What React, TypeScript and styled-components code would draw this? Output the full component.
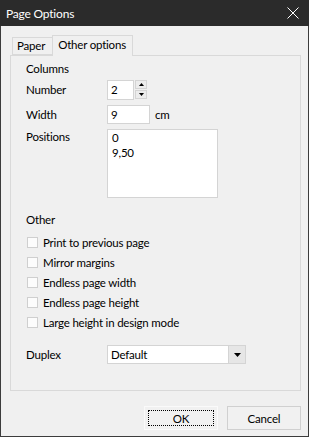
import React, { useState } from "react";
import styled, { createGlobalStyle } from "styled-components";

const GlobalStyle = createGlobalStyle`
  html, body {
    margin: 0;
    padding: 0;
    background: #f0f0f0;
  }
  * {
    box-sizing: border-box;
  }
`;

const Window = styled.div`
  width: 309px;
  height: 437px;
  background: #f0f0f0;
  border: 1px solid #3c3c3c;
  border-top: none;
  display: flex;
  flex-direction: column;
  font-family: Lato, "Noto Sans", sans-serif;
  font-size: 11.5px;
  letter-spacing: -0.2px;
  color: #000;
`;

const TitleBar = styled.div`
  height: 26px;
  margin: 0 -1px;
  background: #2b2b2b;
  color: #fff;
  font-size: 12px;
  display: flex;
  align-items: center;
  justify-content: space-between;
  padding: 0 10px 0 6px;
`;

const CloseButton = styled.div`
  width: 12px;
  height: 12px;
  display: flex;
`;

const Body = styled.div`
  flex: 1;
  display: flex;
  flex-direction: column;
  padding: 9px 7px 0 9px;
`;

const TabStrip = styled.div`
  display: flex;
  align-items: flex-end;
  height: 20px;
  padding-left: 2px;
  position: relative;
  z-index: 1;
`;

const Tab = styled.div<{ $active?: boolean }>`
  height: ${(p) => (p.$active ? "21px" : "18px")};
  padding: ${(p) => (p.$active ? "0 6px 2px 5px" : "0 7px 0 4px")};
  margin-bottom: ${(p) => (p.$active ? "-1px" : "0")};
  margin-left: ${(p) => (p.$active ? "-1px" : "0")};
  background: #f0f0f0;
  border: 1px solid #d9d9d9;
  border-bottom: ${(p) => (p.$active ? "none" : "1px solid #d9d9d9")};
  display: flex;
  align-items: center;
  line-height: 16px;
`;

const Panel = styled.div`
  height: 336px;
  border: 1px solid #d9d9d9;
  padding: 5px 0 0 15px;
  display: flex;
  flex-direction: column;
`;

const Heading = styled.div<{ $top?: number }>`
  height: 16px;
  line-height: 16px;
  margin-top: ${(p) => p.$top || 0}px;
`;

const Row = styled.div<{ $h: number; $top?: number; $align?: string }>`
  display: flex;
  align-items: ${(p) => p.$align || "center"};
  height: ${(p) => p.$h}px;
  margin-top: ${(p) => p.$top || 0}px;
`;

const Label = styled.div`
  width: 81px;
  flex-shrink: 0;
  line-height: 16px;
`;

const TextInput = styled.div<{ $w: number }>`
  width: ${(p) => p.$w}px;
  height: 100%;
  background: #fff;
  border: 1px solid #d4d4d4;
  padding: 0 3px;
  display: flex;
  align-items: center;
  line-height: 16px;
`;

const Spinner = styled.div`
  display: flex;
  flex-direction: column;
  gap: 1px;
  margin-left: 1px;
  height: 20px;
`;

const SpinButton = styled.div`
  width: 12px;
  height: 9px;
  background: #ececec;
  border: 1px solid #d4d4d4;
  display: flex;
  align-items: center;
  justify-content: center;
`;

const Unit = styled.span`
  margin-left: 5px;
  line-height: 16px;
`;

const TextArea = styled.div`
  width: 111px;
  height: 69px;
  background: #fff;
  border: 1px solid #d4d4d4;
  padding: 0 4px;
`;

const TextLine = styled.div`
  height: 15px;
  line-height: 15px;
`;

const CheckList = styled.div`
  display: flex;
  flex-direction: column;
  margin-top: 4px;
`;

const CheckRow = styled.label`
  display: flex;
  align-items: center;
  height: 20px;
  padding-left: 1px;
  cursor: default;
`;

const Box = styled.span`
  width: 11px;
  height: 11px;
  background: #fcfcfc;
  border: 1px solid #cfcfcf;
  margin-right: 5px;
  display: flex;
  align-items: center;
  justify-content: center;
`;

const Select = styled.div`
  width: 139px;
  height: 19px;
  display: flex;
  background: #fff;
  border: 1px solid #d4d4d4;
`;

const SelectValue = styled.div`
  flex: 1;
  padding-left: 3px;
  line-height: 17px;
`;

const SelectArrow = styled.div`
  width: 17px;
  background: #e6e6e6;
  border-left: 1px solid #d4d4d4;
  display: flex;
  align-items: center;
  justify-content: center;
`;

const Footer = styled.div`
  display: flex;
  justify-content: flex-end;
  gap: 9px;
  margin-top: 15px;
`;

const Button = styled.button<{ $default?: boolean }>`
  width: 74px;
  height: 24px;
  font: inherit;
  letter-spacing: inherit;
  color: #000;
  background: #f1f1f1;
  border: 1px solid ${(p) => (p.$default ? "#fafafa" : "#d0d0d0")};
  padding: 0;
  position: relative;
  &::after {
    content: "";
    display: ${(p) => (p.$default ? "block" : "none")};
    position: absolute;
    inset: 3px;
    border: 1px dotted #000;
  }
`;

const options = [
  "Print to previous page",
  "Mirror margins",
  "Endless page width",
  "Endless page height",
  "Large height in design mode",
];

export default function App() {
  const [checked, setChecked] = useState<boolean[]>(options.map(() => false));
  const toggle = (i: number) =>
    setChecked((c) => c.map((v, j) => (j === i ? !v : v)));

  return (
    <>
      <GlobalStyle />
      <Window>
        <TitleBar>
          <span>Page Options</span>
          <CloseButton>
            <svg width="12" height="12" viewBox="0 0 12 12">
              <path d="M0.5 0.5L11.5 11.5M11.5 0.5L0.5 11.5" stroke="#fff" strokeWidth="1" />
            </svg>
          </CloseButton>
        </TitleBar>
        <Body>
          <TabStrip>
            <Tab>Paper</Tab>
            <Tab $active>Other options</Tab>
          </TabStrip>
          <Panel>
            <Heading>Columns</Heading>
            <Row $h={20} $top={3}>
              <Label>Number</Label>
              <TextInput $w={27}>2</TextInput>
              <Spinner>
                <SpinButton>
                  <svg width="5" height="3" viewBox="0 0 5 3">
                    <path d="M2.5 0L5 3H0z" fill="#000" />
                  </svg>
                </SpinButton>
                <SpinButton>
                  <svg width="5" height="3" viewBox="0 0 5 3">
                    <path d="M0 0H5L2.5 3z" fill="#000" />
                  </svg>
                </SpinButton>
              </Spinner>
            </Row>
            <Row $h={19} $top={5}>
              <Label>Width</Label>
              <TextInput $w={43}>9</TextInput>
              <Unit>cm</Unit>
            </Row>
            <Row $h={69} $top={5} $align="flex-start">
              <Label>Positions</Label>
              <TextArea>
                <TextLine>0</TextLine>
                <TextLine>9,50</TextLine>
              </TextArea>
            </Row>
            <Heading $top={14}>Other</Heading>
            <CheckList>
              {options.map((o, i) => (
                <CheckRow key={o} onClick={() => toggle(i)}>
                  <Box>
                    {checked[i] && (
                      <svg width="9" height="9" viewBox="0 0 9 9">
                        <path d="M1 4.5L3.5 7L8 1.5" stroke="#000" fill="none" />
                      </svg>
                    )}
                  </Box>
                  {o}
                </CheckRow>
              ))}
            </CheckList>
            <Row $h={19} $top={13}>
              <Label>Duplex</Label>
              <Select>
                <SelectValue>Default</SelectValue>
                <SelectArrow>
                  <svg width="7" height="4" viewBox="0 0 7 4">
                    <path d="M0 0H7L3.5 4z" fill="#000" />
                  </svg>
                </SelectArrow>
              </Select>
            </Row>
          </Panel>
          <Footer>
            <Button $default>OK</Button>
            <Button>Cancel</Button>
          </Footer>
        </Body>
      </Window>
    </>
  );
}
